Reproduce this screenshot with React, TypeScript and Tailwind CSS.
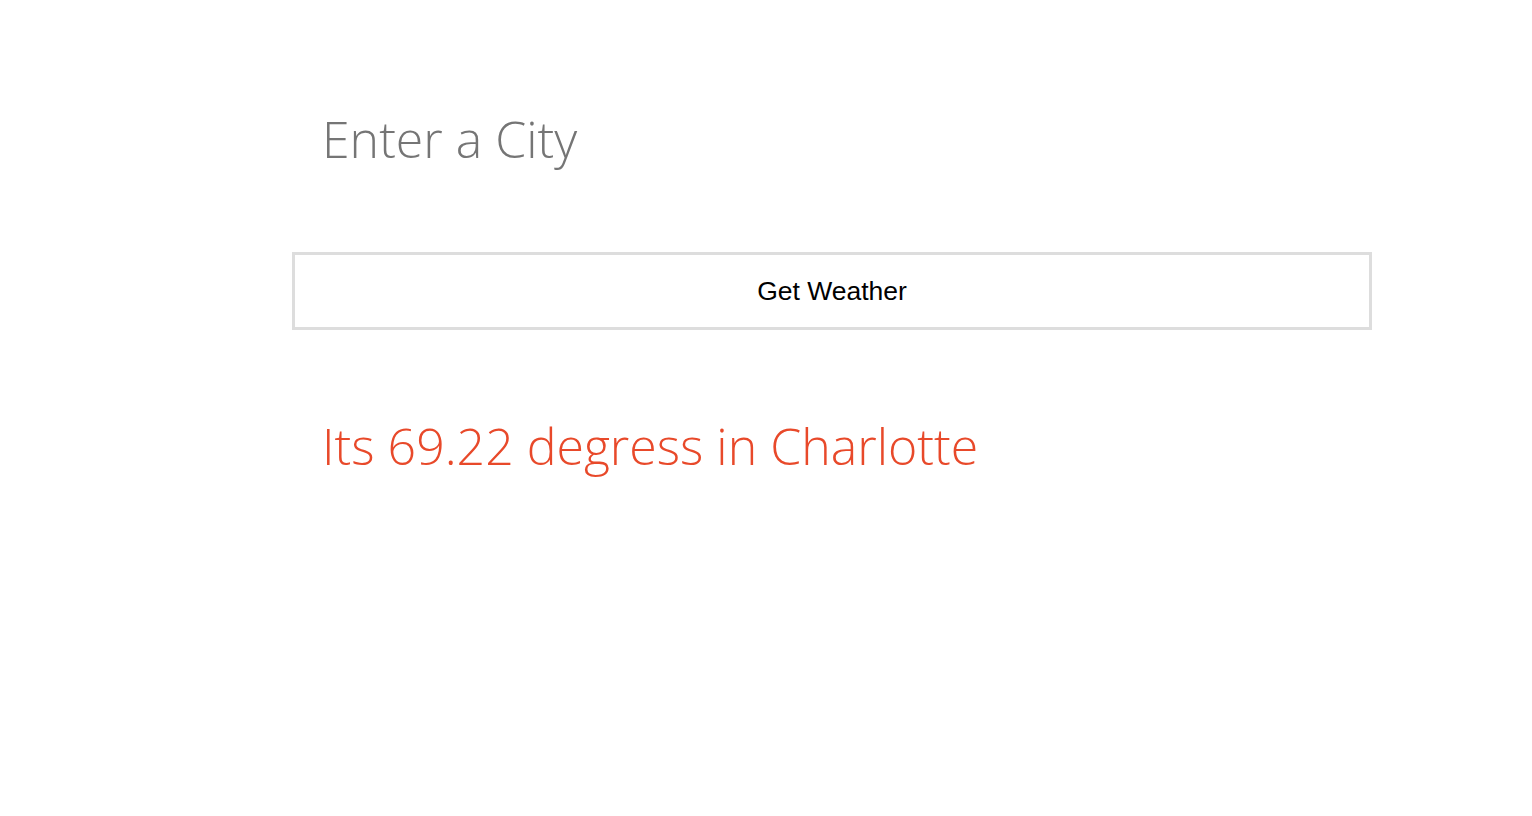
import React, {useState} from 'react';

const App = () => {
    const [city, setCity] = useState('');

    return (
        <div className="min-h-screen bg-white font-['Open_Sans',sans-serif]">
            <div className="ml-[292px] w-[1080px] pt-[104px]">
                <input
                    value={city}
                    onChange={e => setCity(e.target.value)}
                    placeholder="Enter a City"
                    className="block w-full h-[70px] px-[30px] text-[50px] leading-[70px] font-light text-[#757575] bg-transparent outline-none placeholder:text-[#757575]"
                />
                <button
                    className="block w-full h-[78px] mt-[78px] pt-[2px] border-[3px] border-solid border-[#dddddd] bg-white text-[26.5px] text-black font-['Liberation_Sans',Arial,sans-serif]">
                    Get Weather
                </button>
                <p className="mt-[81px] px-[30px] text-[50px] leading-[70px] font-light text-[#e8492a]">
                    Its 69.22 degress in Charlotte
                </p>
            </div>
        </div>
    );
};

export default App;
